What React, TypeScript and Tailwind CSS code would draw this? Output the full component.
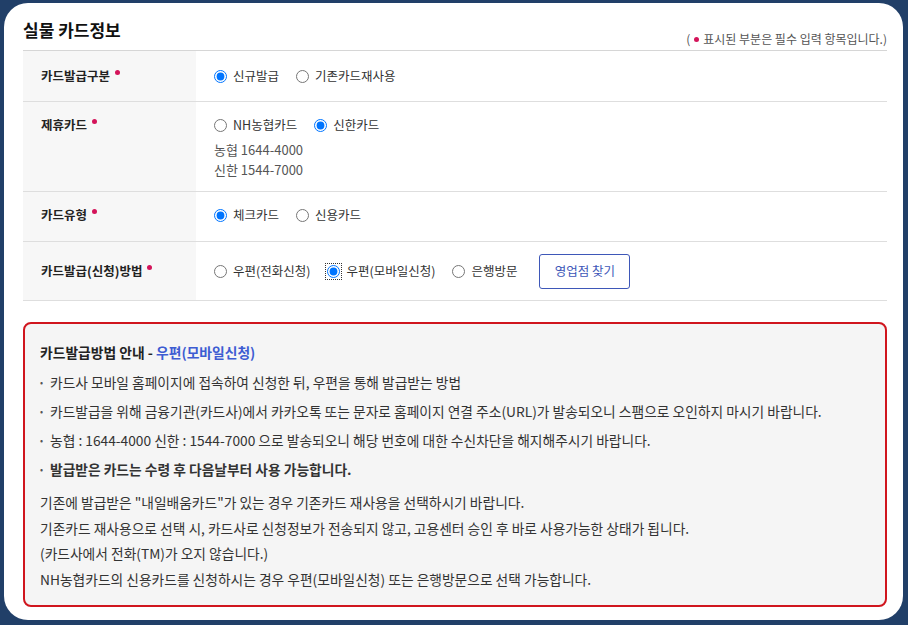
import React from "react";

const FONT = { fontFamily: '"Noto Sans CJK KR", "Noto Sans", sans-serif' };

function Req() {
  return (
    <span className="inline-block w-[5px] h-[5px] rounded-full bg-[#d4145a] ml-[5px] -translate-y-[6px]" />
  );
}

interface RadioProps {
  label: string;
  checked?: boolean;
  focused?: boolean;
}

function Radio({ label, checked = false, focused = false }: RadioProps) {
  return (
    <label className="flex items-center gap-[6px] text-[12.5px] text-[#333] whitespace-nowrap">
      <span
        className={
          focused
            ? "flex items-center justify-center w-[17px] h-[17px] -mx-[2px] border border-dotted border-[#333]"
            : "flex items-center justify-center w-[13px] h-[13px]"
        }
      >
        <input type="radio" checked={checked} readOnly className="m-0 w-[13px] h-[13px]" />
      </span>
      {label}
    </label>
  );
}

interface RowProps {
  label: string;
  children: React.ReactNode;
  className?: string;
  labelClass?: string;
  valueClass?: string;
}

function Row({ label, children, className = "", labelClass = "", valueClass = "" }: RowProps) {
  return (
    <div className={`grid grid-cols-[173px_1fr] border-b border-[#dedede] ${className}`}>
      <div className={`bg-[#f7f7f7] pl-[18px] text-[12.5px] font-bold text-[#222] ${labelClass}`}>
        <span>
          {label}
          <Req />
        </span>
      </div>
      <div className={`pl-[18px] ${valueClass}`}>{children}</div>
    </div>
  );
}

const bullets = [
  "카드사 모바일 홈페이지에 접속하여 신청한 뒤, 우편을 통해 발급받는 방법",
  "카드발급을 위해 금융기관(카드사)에서 카카오톡 또는 문자로 홈페이지 연결 주소(URL)가 발송되오니 스팸으로 오인하지 마시기 바랍니다.",
  "농협 : 1644-4000 신한 : 1544-7000 으로 발송되오니 해당 번호에 대한 수신차단을 해지해주시기 바랍니다.",
];

const notes = [
  '기존에 발급받은 "내일배움카드"가 있는 경우 기존카드 재사용을 선택하시기 바랍니다.',
  "기존카드 재사용으로 선택 시, 카드사로 신청정보가 전송되지 않고, 고용센터 승인 후 바로 사용가능한 상태가 됩니다.",
  "(카드사에서 전화(TM)가 오지 않습니다.)",
  "NH농협카드의 신용카드를 신청하시는 경우 우편(모바일신청) 또는 은행방문으로 선택 가능합니다.",
];

export default function App() {
  return (
    <div className="w-[908px] h-[625px] bg-[#213f68] pt-[3px] pl-[4px] pr-[5px] pb-[5px]" style={FONT}>
      <div className="h-full bg-white rounded-[24px] pl-[19px] pr-[16px] pt-[15px]">
        <div className="flex items-end justify-between h-[33px] border-b border-[#d6d6d6]">
          <h2 className="text-[17px] font-bold text-[#111] leading-none pb-[12px]">실물 카드정보</h2>
          <p className="text-[12px] text-[#555] pb-[2px] flex items-center">
            (<span className="inline-block w-[5px] h-[5px] rounded-full bg-[#d4145a] mx-[4px]" />
            표시된 부분은 필수 입력 항목입니다.)
          </p>
        </div>

        <Row label="카드발급구분" className="h-[51px]" labelClass="flex items-center" valueClass="flex items-center">
          <div className="flex gap-[17px]">
            <Radio label="신규발급" checked />
            <Radio label="기존카드재사용" />
          </div>
        </Row>

        <Row label="제휴카드" className="h-[90px]" labelClass="pt-[14px]">
          <div className="pt-[14px]">
            <div className="flex gap-[17px]">
              <Radio label="NH농협카드" />
              <Radio label="신한카드" checked />
            </div>
            <div className="mt-[5px] text-[13px] text-[#555] leading-[20px]">
              <div>농협 1644-4000</div>
              <div>신한 1544-7000</div>
            </div>
          </div>
        </Row>

        <Row label="카드유형" className="h-[50px]" labelClass="pt-[14px]">
          <div className="pt-[14px] flex gap-[17px]">
            <Radio label="체크카드" checked />
            <Radio label="신용카드" />
          </div>
        </Row>

        <Row label="카드발급(신청)방법" className="h-[59px]" labelClass="flex items-center" valueClass="flex items-center">
          <div className="flex items-center gap-[17px]">
            <Radio label="우편(전화신청)" />
            <Radio label="우편(모바일신청)" checked focused />
            <Radio label="은행방문" />
            <button className="ml-[5px] h-[35px] w-[91px] border border-[#3e57b8] rounded-[3px] text-[12.5px] text-[#3e57b8] bg-white">
              영업점 찾기
            </button>
          </div>
        </Row>

        <div className="mt-[21px] h-[285px] rounded-[8px] border-2 border-[#d0161e] bg-[#f5f5f5] px-[15px] pt-[18px] text-[13.75px] text-[#333]">
          <h3 className="text-[13.8px] font-bold text-[#222] leading-[20px]">
            카드발급방법 안내 - <span className="text-[#3d5cd2]">우편(모바일신청)</span>
          </h3>
          <ul className="mt-[6px]">
            {bullets.map((b) => (
              <li key={b} className="flex items-center h-[29px]">
                <span className="text-[9px] text-[#555] w-[10px]">•</span>
                {b}
              </li>
            ))}
            <li className="flex items-center h-[29px] font-bold">
              <span className="text-[9px] text-[#555] w-[10px] font-normal">•</span>
              발급받은 카드는 수령 후 다음날부터 사용 가능합니다.
            </li>
          </ul>
          <div className="mt-[6px]">
            {notes.map((n) => (
              <p key={n} className="leading-[25.5px]">
                {n}
              </p>
            ))}
          </div>
        </div>
      </div>
    </div>
  );
}
